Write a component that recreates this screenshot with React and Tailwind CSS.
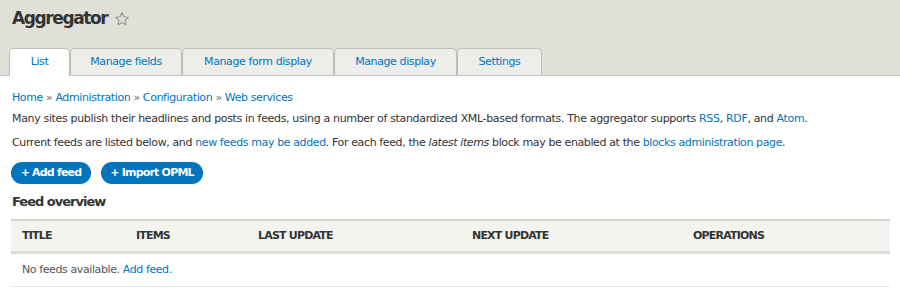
import React from "react";

const font = { fontFamily: '"DejaVu Sans", Verdana, sans-serif' };

function Star() {
  return (
    <svg width="16" height="16" viewBox="0 0 24 24" fill="none" stroke="#9a9a94" strokeWidth="1.7" strokeLinejoin="round">
      <path d="M12 2.5l2.9 6.1 6.6.8-4.9 4.6 1.3 6.6L12 17.3l-5.9 3.3 1.3-6.6-4.9-4.6 6.6-.8z" />
    </svg>
  );
}

const tabs = [
  { label: "List", w: "w-[61px]", active: true },
  { label: "Manage fields", w: "w-[112px]" },
  { label: "Manage form display", w: "w-[152px]" },
  { label: "Manage display", w: "w-[123px]" },
  { label: "Settings", w: "w-[85px]" },
];

export default function App() {
  return (
    <div className="w-[900px] h-[300px] bg-white text-[#333] overflow-hidden" style={font}>
      <div className="h-[76px] bg-[#e0e0d8] border-b border-[#c6c6c0] flex flex-col">
        <div className="flex items-center gap-[7px] pl-[12px] pt-[1px] h-[37px]">
          <h1 className="text-[17px] font-bold text-[#333] tracking-[-1.4px]">Aggregator</h1>
          <Star />
        </div>
        <div className="flex pl-[9px] mt-auto">
          {tabs.map((t) => (
            <div
              key={t.label}
              className={`${t.w} h-[27px] flex items-center justify-center text-[11px] tracking-[-0.4px] text-[#0074bd] rounded-t-[5px] border border-b-0 border-[#bfbfba] ${
                t.active ? "bg-white relative z-10 h-[28px] -mb-px" : "bg-[#ededea]"
              }`}
            >
              {t.label}
            </div>
          ))}
        </div>
      </div>

      <div className="px-[12px] pt-[15px] text-[11px] leading-[14px] tracking-[-0.4px]">
        <div className="text-[#0074bd]">
          Home <span className="text-[#666]">»</span> Administration <span className="text-[#666]">»</span> Configuration{" "}
          <span className="text-[#666]">»</span> Web services
        </div>
        <p className="mt-[7px] tracking-[-0.34px]">
          Many sites publish their headlines and posts in feeds, using a number of standardized XML-based formats. The aggregator supports{" "}
          <span className="text-[#0074bd]">RSS</span>, <span className="text-[#0074bd]">RDF</span>, and{" "}
          <span className="text-[#0074bd]">Atom</span>.
        </p>
        <p className="mt-[10px] tracking-[-0.38px]">
          Current feeds are listed below, and <span className="text-[#0074bd]">new feeds may be added</span>. For each feed, the{" "}
          <em>latest items</em> block may be enabled at the <span className="text-[#0074bd]">blocks administration page</span>.
        </p>
        <div className="flex gap-[10px] mt-[12px] -ml-px">
          <div className="h-[22px] w-[80px] rounded-full bg-[#0074bd] text-white font-bold text-[11px] tracking-[-0.8px] flex items-center justify-center">
            + Add feed
          </div>
          <div className="h-[22px] w-[102px] rounded-full bg-[#0074bd] text-white font-bold text-[11px] tracking-[-0.8px] flex items-center justify-center">
            + Import OPML
          </div>
        </div>
        <h2 className="mt-[11px] text-[13px] font-bold tracking-[-1px]">Feed overview</h2>
      </div>

      <div className="ml-[11px] mt-[10px] w-[879px] text-[11px]">
        <div className="h-[35px] bg-[#f3f3f0] border-t-2 border-[#d4d4ce] border-b-[3px] border-b-[#dcdcd6] grid grid-cols-[114px_122px_214px_221px_1fr] items-center pl-[11px] font-bold tracking-[-0.8px]">
          <div>TITLE</div>
          <div>ITEMS</div>
          <div>LAST UPDATE</div>
          <div>NEXT UPDATE</div>
          <div>OPERATIONS</div>
        </div>
        <div className="h-[33px] border-b border-[#e6e6e2] flex items-center pl-[11px] text-[#555] tracking-[-0.4px]">
          No feeds available.&nbsp;<span className="text-[#0074bd]">Add feed.</span>
        </div>
      </div>
    </div>
  );
}
